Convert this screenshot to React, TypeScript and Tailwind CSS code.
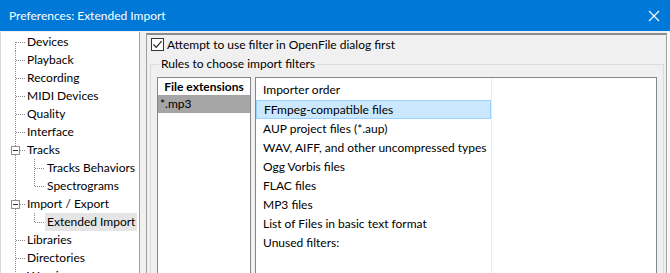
import React from 'react';

type Node = {
  label: string;
  level: 0 | 1;
  box?: boolean;
  first?: boolean;
  last?: boolean;
  selected?: boolean;
};

const tree: Node[] = [
  { label: 'Devices', level: 0, first: true },
  { label: 'Playback', level: 0 },
  { label: 'Recording', level: 0 },
  { label: 'MIDI Devices', level: 0 },
  { label: 'Quality', level: 0 },
  { label: 'Interface', level: 0 },
  { label: 'Tracks', level: 0, box: true },
  { label: 'Tracks Behaviors', level: 1 },
  { label: 'Spectrograms', level: 1, last: true },
  { label: 'Import / Export', level: 0, box: true },
  { label: 'Extended Import', level: 1, last: true, selected: true },
  { label: 'Libraries', level: 0 },
  { label: 'Directories', level: 0 },
  { label: 'Warnings', level: 0 },
];

const importers = [
  'FFmpeg-compatible files',
  'AUP project files (*.aup)',
  'WAV, AIFF, and other uncompressed types',
  'Ogg Vorbis files',
  'FLAC files',
  'MP3 files',
  'List of Files in basic text format',
  'Unused filters:',
];

const dot = { stroke: '#8a8a8a', strokeWidth: 1, strokeDasharray: '1 1' };

const TreeLines: React.FC<{ node: Node }> = ({ node }) => {
  const w = node.level === 0 ? 24 : 44;
  return (
    <svg width={w} height={18} className="shrink-0 block">
      {/* root level vertical */}
      {node.level === 0 && !node.box && (
        <line x1={14.5} y1={node.first ? 9 : 0} x2={14.5} y2={18} {...dot} />
      )}
      {node.level === 0 && node.box && (
        <>
          <line x1={14.5} y1={0} x2={14.5} y2={5} {...dot} />
          <line x1={14.5} y1={14} x2={14.5} y2={18} {...dot} />
          <rect x={10.5} y={5.5} width={8} height={8} fill="#fff" stroke="#919191" />
          <line x1={12} y1={9.5} x2={17} y2={9.5} stroke="#333" strokeWidth={1} />
          <line x1={19} y1={9.5} x2={24} y2={9.5} {...dot} />
        </>
      )}
      {node.level === 0 && !node.box && (
        <line x1={15} y1={9.5} x2={24} y2={9.5} {...dot} />
      )}
      {node.level === 1 && (
        <>
          <line x1={14.5} y1={0} x2={14.5} y2={18} {...dot} />
          <line x1={33.5} y1={0} x2={33.5} y2={node.last ? 10 : 18} {...dot} />
          <line x1={34} y1={9.5} x2={44} y2={9.5} {...dot} />
        </>
      )}
    </svg>
  );
};

export default function App() {
  return (
    <div
      className="w-[670px] h-[273px] bg-[#f0f0f0] overflow-hidden flex flex-col text-[12px] text-black leading-none"
      style={{ fontFamily: '"Segoe UI", Lato, "Liberation Sans", sans-serif' }}
    >
      {/* Title bar */}
      <div className="h-[31px] shrink-0 bg-[#0078d7] text-white flex items-center pl-[9px] pr-[9px]">
        <span className="text-[12px]">Preferences: Extended Import</span>
        <svg width="12" height="12" viewBox="0 0 12 12" className="ml-auto mr-[1px]">
          <path d="M1 1 L11 11 M11 1 L1 11" stroke="#fff" strokeWidth="1.1" />
        </svg>
      </div>

      <div className="flex flex-1 min-h-0 pt-px">
        {/* Tree */}
        <div className="w-[140px] shrink-0 bg-white border-l border-r border-[#a0a0a0] border-l-[#d9d9d9] pt-px">
          {tree.map((n) => (
            <div key={n.label} className="h-[18px] flex items-center">
              <TreeLines node={n} />
              <span
                className={`h-[18px] flex items-center px-[2px] whitespace-nowrap ${
                  n.selected ? 'bg-[#e5e5e5]' : ''
                }`}
              >
                {n.label}
              </span>
            </div>
          ))}
        </div>

        {/* Right scrolled panel */}
        <div className="ml-[6px] mt-px w-[521px] shrink-0 border-t-2 border-l border-r border-[#a0a0a0] border-t-[#8c8c8c] flex flex-col pl-[3px] pr-[2px]">
          <div className="flex items-center h-[13px] mt-[3px] ml-[1px]">
            <div className="w-[13px] h-[13px] bg-white border border-[#333] flex items-center justify-center">
              <svg width="11" height="11" viewBox="0 0 11 11">
                <path d="M1.5 5.5 L4.2 8.3 L9.6 2.2" stroke="#222" strokeWidth="1.2" fill="none" />
              </svg>
            </div>
            <span className="ml-[3px]">Attempt to use filter in OpenFile dialog first</span>
          </div>

          {/* Group box */}
          <div className="relative mt-[13px] flex-1 border border-[#dcdcdc] border-b-0 flex pt-[12px] pl-[6px] pr-[6px]">
            <span className="absolute -top-[7px] left-[8px] bg-[#f0f0f0] px-[2px]">
              Rules to choose import filters
            </span>

            {/* File extensions list */}
            <div className="w-[94px] shrink-0 bg-white border border-[#828790] border-b-0">
              <div className="h-[17px] flex items-center justify-center font-bold">File extensions</div>
              <div className="h-[18px] flex items-center bg-[#a5a5a5] pl-[2px]">*.mp3</div>
            </div>

            {/* Importer list */}
            <div className="ml-[4px] flex-1 bg-white border border-[#828790] border-b-0 flex">
              <div className="w-[236px] shrink-0 border-r border-[#ececec] pt-px">
                <div className="h-[21px] flex items-center pl-[7px]">Importer order</div>
                <div>
                  {importers.map((t, i) => (
                    <div
                      key={t}
                      className={`h-[19px] flex items-center pl-[7px] whitespace-nowrap ${
                        i === 0 ? 'bg-[#cce8ff] border border-[#99d1ff] pl-[6px]' : ''
                      }`}
                    >
                      {t}
                    </div>
                  ))}
                </div>
              </div>
            </div>
          </div>
        </div>
        <div className="flex-1 bg-[#fafafa]" />
      </div>
    </div>
  );
}
